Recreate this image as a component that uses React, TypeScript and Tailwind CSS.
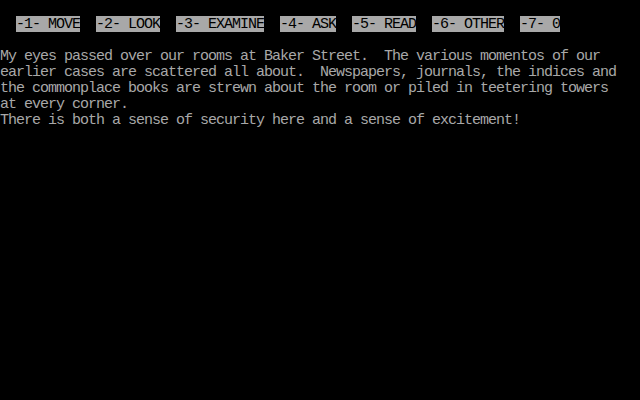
const menu = ["-1- MOVE", "-2- LOOK", "-3- EXAMINE", "-4- ASK", "-5- READ", "-6- OTHER", "-7- 0"];

const lines = [
  "My eyes passed over our rooms at Baker Street.  The various momentos of our",
  "earlier cases are scattered all about.  Newspapers, journals, the indices and",
  "the commonplace books are strewn about the room or piled in teetering towers",
  "at every corner.",
  "There is both a sense of security here and a sense of excitement!",
];

export default function App() {
  return (
    <div
      className="w-[640px] h-[400px] bg-black text-[#a8a8a8] text-[15px] tracking-[-1px] leading-[16px] pt-4 overflow-hidden"
      style={{ fontFamily: '"Liberation Mono", "DejaVu Sans Mono", monospace' }}
    >
      <div className="flex gap-4 pl-4 h-4">
        {menu.map((m) => (
          <span key={m} className="bg-[#a8a8a8] text-black whitespace-pre h-4 w-fit pt-px">
            {m}
          </span>
        ))}
      </div>
      <div className="mt-4 flex flex-col">
        {lines.map((l, i) => (
          <div key={i} className="whitespace-pre h-4 pt-px">
            {l}
          </div>
        ))}
      </div>
    </div>
  );
}
